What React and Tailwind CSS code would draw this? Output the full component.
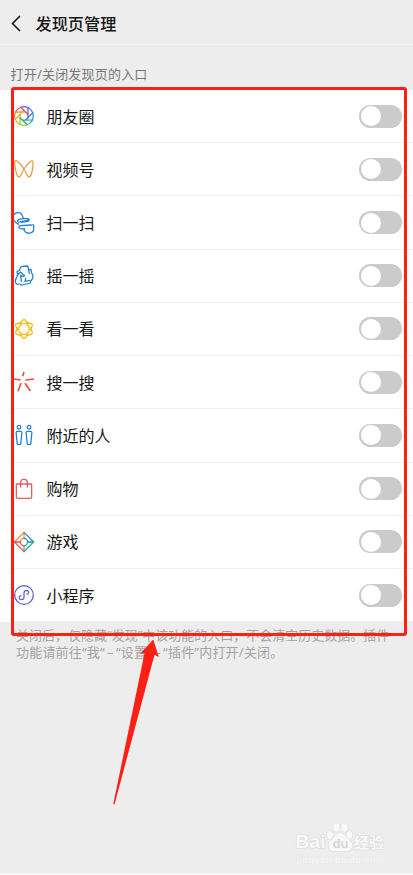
import React, { useState } from 'react';

// every icon is drawn on a 60x60 grid and shown at 20px
function Icon({ children, color }) {
  return (
    <svg viewBox="0 0 60 60" className="h-5 w-5 overflow-visible" fill="none" stroke={color} strokeWidth="3.8" strokeLinecap="round" strokeLinejoin="round">
      {children}
    </svg>
  );
}

const bladeColors = ['#2f7fe6', '#6a5fdc', '#ea4c52', '#f07f30', '#efb01c', '#98c828', '#2fb659', '#2498df'];

function MomentsIcon() {
  const point = (deg, r) => {
    const a = (deg * Math.PI) / 180;
    return `${(30 + r * Math.cos(a)).toFixed(1)} ${(30 - r * Math.sin(a)).toFixed(1)}`;
  };
  return (
    <Icon>
      {bladeColors.map((c, i) => (
        <path
          key={c}
          stroke={c}
          d={`M${point(i * 45 + 65, 28)} A28 28 0 0 1 ${point(i * 45 + 20, 28)} L${point(i * 45 - 67, 13)}`}
        />
      ))}
    </Icon>
  );
}

function ChannelsIcon() {
  return (
    <Icon color="#e99a3e">
      <path d="M5 5C14 4 24 22 30 30C36 40 40 55 46 54C52 53 58 24 57 10C57 0 46 7 30 30C24 40 20 55 14 54C8 53 2 24 2 11C2 7 3 5 5 5Z" />
    </Icon>
  );
}

function ScanIcon() {
  return (
    <Icon color="#1f80d3">
      <path d="M0 5C6-3 19-3 23 4C26 8 27 12 28 17M0 23L7 30Q9 33 14 33M28 17L15 19C9 21 10 28 15 27L40 22L43 18" />
      <path d="M28 17L41 17C47 17 47 24 41 25L22 28" />
      <path d="M59 38V48C59 61 45 63 36 58C31 55 28 50 32 48M32 48L19 47C13 46 14 38 19 38L53 36C57 35 59 35 59 38" />
    </Icon>
  );
}

function ShakeIcon() {
  return (
    <Icon color="#1f80d3">
      <path d="M17 12L19 5Q20 3 23 2L38 0Q41 0 42 3L44 11L51 10L53 21L57 29L56 37L50 46L49 51L24 57Q20 58 19 54" />
      <path d="M17 12L9 17L11 27L4 43L5 51L10 55L15 54M11 27L19 18L32 29Q28 34 20 28L22 46" />
      <path d="M44 11L46 22M35 36L33 46L48 43" />
    </Icon>
  );
}

function TopStoriesIcon() {
  return (
    <Icon color="#efbd20">
      <circle cx="30" cy="30" r="16" />
      {[0, 60, 120, 180, 240, 300].map((deg) => (
        <path key={deg} transform={`rotate(${deg} 30 30)`} d="M17 15C20 10 24 6 27 3Q30 0 33 3C36 6 40 10 43 15" />
      ))}
    </Icon>
  );
}

function SearchIcon() {
  return (
    <Icon color="#e6504f">
      <g strokeWidth="5" strokeLinecap="butt">
        <path d="M30 0L26 13M0 21L20 24M34 24L60 21M21 33L12 58M33 34L49 57" />
      </g>
    </Icon>
  );
}

function NearbyIcon() {
  return (
    <Icon color="#1f80d3">
      <circle cx="15" cy="6.500" r="5.500" />
      <circle cx="45" cy="6.500" r="5.500" />
      <path d="M10 19H20Q24 19 23.500 24L20.500 55Q20 59 15 59Q10 59 9.500 55L6.500 24Q6 19 10 19Z" />
      <path d="M40 19H50Q54 19 53.500 24L50.500 55Q50 59 45 59Q40 59 39.500 55L36.500 24Q36 19 40 19Z" />
    </Icon>
  );
}

function ShoppingIcon() {
  return (
    <Icon color="#e25b5c">
      <path d="M7 15H53V54Q53 58 49 58H11Q7 58 7 54ZM20 24V11Q20 1 30 1Q40 1 40 11V24" />
    </Icon>
  );
}

function GamesIcon() {
  return (
    <Icon>
      <path stroke="#ef9138" d="M1 30L30 1V19M19 30A11 11 0 0 1 30 19" />
      <path stroke="#2c83d8" d="M30 1L59 30H41M30 19A11 11 0 0 1 41 30" />
      <path stroke="#2fb37c" d="M59 30L30 59V41M41 30A11 11 0 0 1 30 41" />
      <path stroke="#e35655" d="M30 59L1 30H19M30 41A11 11 0 0 1 19 30" />
    </Icon>
  );
}

function MiniProgramIcon() {
  return (
    <Icon color="#5f5fd0">
      <circle cx="30" cy="30" r="28" />
      <path d="M39 28C45 27 46 17 38 16C33 16 30 19 30 24V36C30 41 26 44 22 44C13 43 14 33 21 32" />
    </Icon>
  );
}

const entries = [
  { name: '朋友圈', icon: MomentsIcon },
  { name: '视频号', icon: ChannelsIcon },
  { name: '扫一扫', icon: ScanIcon },
  { name: '摇一摇', icon: ShakeIcon },
  { name: '看一看', icon: TopStoriesIcon },
  { name: '搜一搜', icon: SearchIcon },
  { name: '附近的人', icon: NearbyIcon },
  { name: '购物', icon: ShoppingIcon },
  { name: '游戏', icon: GamesIcon },
  { name: '小程序', icon: MiniProgramIcon },
];

function Toggle({ on, onClick }) {
  return (
    <button
      onClick={onClick}
      className={`flex h-[23px] w-[43px] items-center rounded-full px-[2px] ${on ? 'justify-end bg-green-500' : 'bg-[#cbcbcb]'}`}
    >
      <span className="h-5 w-5 rounded-full bg-white" />
    </button>
  );
}

function Dash() {
  return <span className="inline-block w-[11px] text-center">–</span>;
}

function Watermark() {
  return (
    <svg viewBox="0 0 100 50" className="absolute left-[293px] top-[818px] h-[50px] w-[100px]">
      <g fill="#f8f8f8" stroke="#dcdcdc" strokeWidth="1.2" paintOrder="stroke">
        <text x="2.500" y="30" fontSize="19" fontWeight="bold" fontFamily="Liberation Sans" textLength="30">Bai</text>
        <ellipse cx="37" cy="17" rx="3" ry="4" />
        <ellipse cx="43.500" cy="9.500" rx="3.200" ry="4.500" />
        <ellipse cx="51.500" cy="9.500" rx="3.200" ry="4.500" />
        <ellipse cx="56.500" cy="17" rx="3" ry="4" />
        <path d="M47 15C43 15 41 20 38 22C34 25 35 33 40 33H54C60 33 61 26 57 22C53 19 51 15 47 15Z" />
        <text x="61" y="30" fontSize="15" fontWeight="bold" fontFamily="Noto Sans CJK SC">经验</text>
      </g>
      <text x="39.500" y="30" fontSize="13" fontWeight="bold" fontFamily="Liberation Sans" fill="#d6d6d6">du</text>
      <text x="4" y="44.500" fontSize="9.500" fontFamily="Liberation Sans" fill="#f8f8f8" stroke="#e6e6e6" strokeWidth="0.5" paintOrder="stroke" textLength="87">jingyan.baidu.com</text>
    </svg>
  );
}

function App() {
  const [enabled, setEnabled] = useState({});

  const toggle = (name) => setEnabled({ ...enabled, [name]: !enabled[name] });

  return (
    <div className="relative h-[875px] w-[413px] overflow-hidden border-b-2 border-[#f7f7f7] bg-[#ededed] font-['Noto_Sans','Noto_Sans_CJK_SC',sans-serif] text-[#161616]">
      <header className="flex h-[47px] items-center border-b border-[#e6e6e6]">
        <svg viewBox="0 0 10 17" className="ml-[11px] h-[17px] w-[10px]" fill="none" stroke="currentColor" strokeWidth="1.6">
          <path d="M9 1L1.500 8.500L9 16" />
        </svg>
        <h1 className="ml-[14.500px] pt-0.5 text-[16.2px] font-medium">发现页管理</h1>
      </header>

      <p className="flex h-[43px] items-end pb-[5.500px] pl-[10.500px] text-[13px] leading-[22px] tracking-[0.2px] text-[#777777]">打开/关闭发现页的入口</p>

      <ul className="bg-white pl-[14px]">
        {entries.map(({ name, icon: EntryIcon }) => (
          <li key={name} className="flex h-[53.230px] items-center border-b border-[#ededed] pr-[11px]">
            <EntryIcon />
            <span className="ml-[12.500px] flex-1 pt-px text-[16px]">{name}</span>
            <Toggle on={!!enabled[name]} onClick={() => toggle(name)} />
          </li>
        ))}
      </ul>

      <p className="whitespace-nowrap pl-4 pt-[5px] text-[13px] leading-[17px] text-[#a3a3a3]">
        关闭后，仅隐藏“发现”中该功能的入口，不会清空历史数据。插件
        <br />
        <span className="tracking-[0.2px]">
          功能请前往“我“<Dash />“设置”<Dash />“插件”内打开/关闭。
        </span>
      </p>

      <div className="pointer-events-none absolute left-[11px] top-[87px] h-[549px] w-[396px] rounded-[3px] border-[3px] border-[#ff1f14]" />
      <svg viewBox="0 0 50 170" className="pointer-events-none absolute left-[112px] top-[638px] h-[170px] w-[50px]">
        <path fill="#ff1f14" d="M41.300 1.500L46.800 19L42.500 16.800L2.500 166.500L1.300 166L32.500 15.200L28.200 15.800Z" />
      </svg>
      <Watermark />
    </div>
  );
}

export default App;
